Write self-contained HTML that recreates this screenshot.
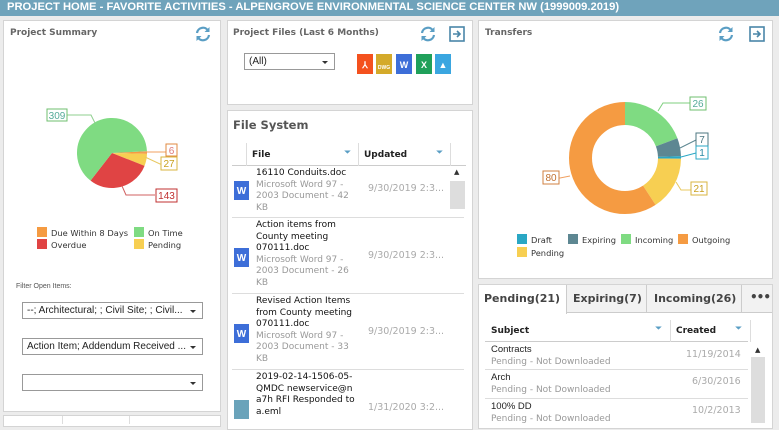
<!DOCTYPE html>
<html><head><meta charset="utf-8"><style>
*{box-sizing:border-box;margin:0;padding:0}
body{width:779px;height:423px;overflow:hidden;background:#ececec;font-family:"DejaVu Sans","Liberation Sans",sans-serif;position:relative;color:#222}
.hdr{position:absolute;left:0;top:0;width:779px;height:16px;background:#6fa3bb;color:#fff;font:bold 11.2px "Liberation Sans",sans-serif;padding:1px 0 0 7px;letter-spacing:0}
.p{position:absolute;background:#fff;border:1px solid #d4d4d4}
.t{position:absolute;font-size:9px;font-weight:bold;color:#666}
.ab{position:absolute}
.sel{position:absolute;border:1px solid #999;background:#fff;font:10px "Liberation Sans",sans-serif;padding:2px 0 0 4px;height:17px}
.sel:after{content:"";position:absolute;right:6px;top:7px;border:3px solid transparent;border-top:3px solid #333}
.fi{position:absolute;width:16px;height:20px;color:#fff;font:bold 9px sans-serif;text-align:center;padding-top:6px}
.row{position:absolute;left:5px;width:232px;border-top:1px solid #ddd}
.fn{position:absolute;left:24px;font-size:9px;line-height:11.5px;color:#111}
.fn span{color:#999}
.dt{position:absolute;left:136px;font-size:9.5px;color:#aaa}
.wi{position:absolute;left:2px;width:15px;height:19px;background:#3d6ed8;color:#fff;font:bold 10px sans-serif;text-align:center;padding-top:5px}
.lg{position:absolute;font-size:8.3px;color:#333}
.lg i{display:inline-block;width:10px;height:10px;vertical-align:-1px;margin-right:4px}
.tab{position:absolute;font-size:11px;font-weight:bold;color:#444}
</style></head><body>
<div class="hdr">PROJECT HOME - FAVORITE ACTIVITIES - ALPENGROVE ENVIRONMENTAL SCIENCE CENTER NW (1999009.2019)</div>

<!-- Project Summary -->
<div class="p" style="left:3px;top:20px;width:218px;height:392px"></div>
<div class="t" style="left:10px;top:28px">Project Summary</div>
<svg class="ab" style="left:194px;top:25px" width="18" height="18" viewBox="0 0 18 18"><path d="M3 8a6 6 0 0 1 11-2.5M15 10a6 6 0 0 1-11 2.5" fill="none" stroke="#5a9ec4" stroke-width="2.2"/><path d="M15.5 2v5h-5zM2.5 16v-5h5z" fill="#5a9ec4"/></svg>
<svg class="ab" style="left:0;top:100px" width="220" height="110" viewBox="0 100 220 110">
<g transform="rotate(-3 112 153)">
<circle cx="112" cy="153" r="17.5" fill="none" stroke="#f59b42" stroke-width="35" stroke-dasharray="1.4 110" />
<circle cx="112" cy="153" r="17.5" fill="none" stroke="#f7cf52" stroke-width="35" stroke-dasharray="6.1 110" stroke-dashoffset="-1.4"/>
<circle cx="112" cy="153" r="17.5" fill="none" stroke="#e04444" stroke-width="35" stroke-dasharray="32.4 110" stroke-dashoffset="-7.5"/>
<circle cx="112" cy="153" r="17.5" fill="none" stroke="#7fdb82" stroke-width="35" stroke-dasharray="70.1 110" stroke-dashoffset="-39.9"/>
</g>
<polyline points="95,123 91,115 67,115" fill="none" stroke="#8fcf8f"/>
<rect x="47" y="109" width="20" height="12" fill="#fff" stroke="#6fbf6f"/><text x="57" y="119" font-size="10" fill="#5a9" text-anchor="middle" font-family="Liberation Sans">309</text>
<polyline points="140,152 166,152" fill="none" stroke="#f0a060"/>
<rect x="166" y="144" width="11" height="12" fill="#fff" stroke="#e08a40"/><text x="171.5" y="154" font-size="10" fill="#d77" text-anchor="middle" font-family="Liberation Sans">6</text>
<polyline points="145,157 160,164 161,164" fill="none" stroke="#e8c860"/>
<rect x="161" y="157" width="16" height="13" fill="#fff" stroke="#d9b640"/><text x="169" y="167" font-size="10" fill="#c9a020" text-anchor="middle" font-family="Liberation Sans">27</text>
<polyline points="122,186 126,195 155,195" fill="none" stroke="#d06060"/>
<rect x="156" y="189" width="21" height="13" fill="#fff" stroke="#c03030"/><text x="166.5" y="199" font-size="10" fill="#c03030" text-anchor="middle" font-family="Liberation Sans">143</text>
</svg>
<div class="lg" style="left:37px;top:227px"><i style="background:#f59b42"></i>Due Within 8 Days</div>
<div class="lg" style="left:134px;top:227px"><i style="background:#7fdb82"></i>On Time</div>
<div class="lg" style="left:37px;top:239px"><i style="background:#e04444"></i>Overdue</div>
<div class="lg" style="left:134px;top:239px"><i style="background:#f7cf52"></i>Pending</div>
<div class="ab" style="left:16px;top:283px;font:7px 'Liberation Sans',sans-serif;color:#555">Filter Open Items:</div>
<div class="sel" style="left:22px;top:302px;width:181px">--; Architectural; ; Civil Site; ; Civil...</div>
<div class="sel" style="left:22px;top:338px;width:181px">Action Item; Addendum Received ...</div>
<div class="sel" style="left:22px;top:374px;width:181px"></div>
<div class="p" style="left:3px;top:415px;width:218px;height:12px"></div>
<div class="ab" style="left:62px;top:416px;height:8px;border-left:1px solid #ddd"></div>
<div class="ab" style="left:129px;top:416px;height:8px;border-left:1px solid #ddd"></div>

<!-- Project Files -->
<div class="p" style="left:227px;top:20px;width:246px;height:85px"></div>
<div class="t" style="left:233px;top:28px">Project Files (Last 6 Months)</div>
<svg class="ab" style="left:419px;top:25px" width="18" height="18" viewBox="0 0 18 18"><path d="M3 8a6 6 0 0 1 11-2.5M15 10a6 6 0 0 1-11 2.5" fill="none" stroke="#5a9ec4" stroke-width="2.2"/><path d="M15.5 2v5h-5zM2.5 16v-5h5z" fill="#5a9ec4"/></svg>
<svg class="ab" style="left:449px;top:26px" width="16" height="16"><rect x="1" y="1" width="14" height="14" fill="#fff" stroke="#4a86a8" stroke-width="1.6"/><path d="M4 8h6M8 5l3 3-3 3" fill="none" stroke="#4a86a8" stroke-width="1.6"/></svg>
<div class="sel" style="left:244px;top:53px;width:91px">(All)</div>
<div class="fi" style="left:357px;top:54px;background:#f4511e">⅄</div>
<div class="fi" style="left:376px;top:54px;background:#d4aa2a;font-size:5px;padding-top:11px">DWG</div>
<div class="fi" style="left:396px;top:54px;background:#3d6ed8">W</div>
<div class="fi" style="left:416px;top:54px;background:#20a05a">X</div>
<div class="fi" style="left:435px;top:54px;background:#3aa6e0">▲</div>

<!-- File System -->
<div class="p" style="left:227px;top:110px;width:246px;height:320px"></div>
<div class="ab" style="left:233px;top:118px;font-size:11.5px;font-weight:bold;color:#555">File System</div>
<div class="ab" style="left:232px;top:145px;width:234px;height:21px;border-bottom:1px solid #ccc"></div>
<div class="ab" style="left:246px;top:143px;height:23px;border-left:1px solid #ddd"></div>
<div class="ab" style="left:358px;top:143px;height:23px;border-left:1px solid #ddd"></div>
<div class="ab" style="left:450px;top:143px;height:23px;border-left:1px solid #ddd"></div>
<div class="ab" style="left:252px;top:150px;font-size:9px;font-weight:bold">File</div>
<div class="ab" style="left:344px;top:148px;font-size:9px;color:#5a9ec4">⏷</div>
<div class="ab" style="left:364px;top:150px;font-size:9px;font-weight:bold">Updated</div>
<div class="ab" style="left:436px;top:148px;font-size:9px;color:#5a9ec4">⏷</div>
<div class="ab" style="left:454px;top:168px;font-size:7px;color:#333">▲</div>
<div class="ab" style="left:450px;top:181px;width:15px;height:28px;background:#ddd"></div>
<div class="ab" style="left:227px;top:166px;width:225px;height:257px">
 <div class="row" style="top:-1px;border:none"><div class="fn" style="top:3px">16110 Conduits.doc<br><span>Microsoft Word 97 -<br>2003 Document - 42<br>KB</span></div><div class="wi" style="top:16px">W</div><div class="dt" style="top:18px">9/30/2019 2:3...</div></div>
 <div class="row" style="top:51px;height:75px"><div class="fn" style="top:2px">Action items from<br>County meeting<br>070111.doc<br><span>Microsoft Word 97 -<br>2003 Document - 26<br>KB</span></div><div class="wi" style="top:30px">W</div><div class="dt" style="top:32px">9/30/2019 2:3...</div></div>
 <div class="row" style="top:127px"><div class="fn" style="top:2px">Revised Action Items<br>from County meeting<br>070111.doc<br><span>Microsoft Word 97 -<br>2003 Document - 33<br>KB</span></div><div class="wi" style="top:30px">W</div><div class="dt" style="top:32px">9/30/2019 2:3...</div></div>
 <div class="row" style="top:203px"><div class="fn" style="top:2px">2019-02-14-1506-05-<br>QMDC newservice@n<br>a7h RFI Responded to<br>a.eml</div><div class="wi" style="top:30px;background:#6aa3ba;color:transparent">.</div><div class="dt" style="top:32px">1/31/2020 3:2...</div></div>
</div>

<!-- Transfers -->
<div class="p" style="left:478px;top:20px;width:295px;height:259px"></div>
<div class="t" style="left:485px;top:28px">Transfers</div>
<svg class="ab" style="left:717px;top:25px" width="18" height="18" viewBox="0 0 18 18"><path d="M3 8a6 6 0 0 1 11-2.5M15 10a6 6 0 0 1-11 2.5" fill="none" stroke="#5a9ec4" stroke-width="2.2"/><path d="M15.5 2v5h-5zM2.5 16v-5h5z" fill="#5a9ec4"/></svg>
<svg class="ab" style="left:749px;top:26px" width="16" height="16"><rect x="1" y="1" width="14" height="14" fill="#fff" stroke="#4a86a8" stroke-width="1.6"/><path d="M4 8h6M8 5l3 3-3 3" fill="none" stroke="#4a86a8" stroke-width="1.6"/></svg>
<svg class="ab" style="left:478px;top:80px" width="295" height="150" viewBox="478 80 295 150">
<g transform="rotate(-90 625 158)" fill="none" stroke-width="23">
<circle cx="625" cy="158" r="44.5" stroke="#7fdb82" stroke-dasharray="53.8 300"/>
<circle cx="625" cy="158" r="44.5" stroke="#5d8792" stroke-dasharray="14.5 300" stroke-dashoffset="-53.8"/>
<circle cx="625" cy="158" r="44.5" stroke="#2aa7c4" stroke-dasharray="2.1 300" stroke-dashoffset="-68.3"/>
<circle cx="625" cy="158" r="44.5" stroke="#f7cf52" stroke-dasharray="43.5 300" stroke-dashoffset="-70.4"/>
<circle cx="625" cy="158" r="44.5" stroke="#f59b42" stroke-dasharray="165.6 300" stroke-dashoffset="-113.9"/>
</g>
<polyline points="658,111 663,103 690,103" fill="none" stroke="#7fcf7f"/>
<rect x="690" y="97" width="16" height="13" fill="#fff" stroke="#6fbf6f"/><text x="698" y="107" font-size="10" fill="#5a9" text-anchor="middle" font-family="Liberation Sans">26</text>
<polyline points="680,148 696,140" fill="none" stroke="#5d8792"/>
<rect x="696" y="133" width="12" height="13" fill="#fff" stroke="#4d7782"/><text x="702" y="143" font-size="10" fill="#4d7782" text-anchor="middle" font-family="Liberation Sans">7</text>
<polyline points="681,157 696,153" fill="none" stroke="#2aa7c4"/>
<rect x="696" y="146" width="12" height="13" fill="#fff" stroke="#2aa7c4"/><text x="702" y="156" font-size="10" fill="#2a8aa4" text-anchor="middle" font-family="Liberation Sans">1</text>
<polyline points="676,182 681,190 691,190" fill="none" stroke="#e8c860"/>
<rect x="691" y="182" width="16" height="13" fill="#fff" stroke="#d9b640"/><text x="699" y="192" font-size="10" fill="#c9a020" text-anchor="middle" font-family="Liberation Sans">21</text>
<polyline points="570,176 560,178 553,178" fill="none" stroke="#f0a060"/>
<rect x="543" y="171" width="16" height="13" fill="#fff" stroke="#d08040"/><text x="551" y="181" font-size="10" fill="#c07030" text-anchor="middle" font-family="Liberation Sans">80</text>
</svg>
<div class="lg" style="left:517px;top:234px"><i style="background:#2aa7c4"></i>Draft</div>
<div class="lg" style="left:568px;top:234px"><i style="background:#5d8792"></i>Expiring</div>
<div class="lg" style="left:621px;top:234px"><i style="background:#7fdb82"></i>Incoming</div>
<div class="lg" style="left:678px;top:234px"><i style="background:#f59b42"></i>Outgoing</div>
<div class="lg" style="left:517px;top:247px"><i style="background:#f7cf52"></i>Pending</div>

<!-- Tabs panel -->
<div class="p" style="left:478px;top:284px;width:295px;height:145px"></div>
<div class="ab" style="left:479px;top:285px;width:293px;height:28px;border-bottom:1px solid #ccc;background:#f2f2f2"></div>
<div class="ab" style="left:479px;top:285px;width:88px;height:29px;background:#fff;border-right:1px solid #ccc"></div>
<div class="tab" style="left:484px;top:292px">Pending(21)</div>
<div class="ab" style="left:567px;top:285px;width:80px;height:28px;border-right:1px solid #ccc"></div>
<div class="tab" style="left:573px;top:292px">Expiring(7)</div>
<div class="ab" style="left:647px;top:285px;width:95px;height:28px;border-right:1px solid #ccc"></div>
<div class="tab" style="left:654px;top:292px">Incoming(26)</div>
<div class="ab" style="left:750px;top:290px;font-size:12px;font-weight:bold;color:#444;letter-spacing:-1px">•••</div>
<div class="ab" style="left:485px;top:320px;width:263px;height:22px;border-bottom:1px solid #ccc"></div>
<div class="ab" style="left:670px;top:320px;height:22px;border-left:1px solid #ddd"></div>
<div class="ab" style="left:750px;top:320px;height:22px;border-left:1px solid #ddd"></div>
<div class="ab" style="left:491px;top:326px;font-size:9px;font-weight:bold">Subject</div>
<div class="ab" style="left:655px;top:324px;font-size:9px;color:#5a9ec4">⏷</div>
<div class="ab" style="left:676px;top:326px;font-size:9px;font-weight:bold">Created</div>
<div class="ab" style="left:735px;top:324px;font-size:9px;color:#5a9ec4">⏷</div>
<div class="ab" style="left:755px;top:346px;font-size:7px;color:#333">▲</div>
<div class="ab" style="left:751px;top:357px;width:14px;height:66px;background:#ddd"></div>
<div class="ab" style="left:491px;top:344px;font:9.5px/12px 'Liberation Sans',sans-serif">Contracts<br><span style="color:#999;font-family:'DejaVu Sans';font-size:9px">Pending - Not Downloaded</span></div>
<div class="dt" style="left:686px;top:349px">11/19/2014</div>
<div class="ab" style="left:485px;top:369px;width:263px;border-top:1px solid #ddd"></div>
<div class="ab" style="left:491px;top:372px;font:9.5px/12px 'Liberation Sans',sans-serif">Arch<br><span style="color:#999;font-family:'DejaVu Sans';font-size:9px">Pending - Not Downloaded</span></div>
<div class="dt" style="left:692px;top:376px">6/30/2016</div>
<div class="ab" style="left:485px;top:398px;width:263px;border-top:1px solid #ddd"></div>
<div class="ab" style="left:491px;top:401px;font:9.5px/12px 'Liberation Sans',sans-serif">100% DD<br><span style="color:#999;font-family:'DejaVu Sans';font-size:9px">Pending - Not Downloaded</span></div>
<div class="dt" style="left:692px;top:405px">10/2/2013</div>
</body></html>
